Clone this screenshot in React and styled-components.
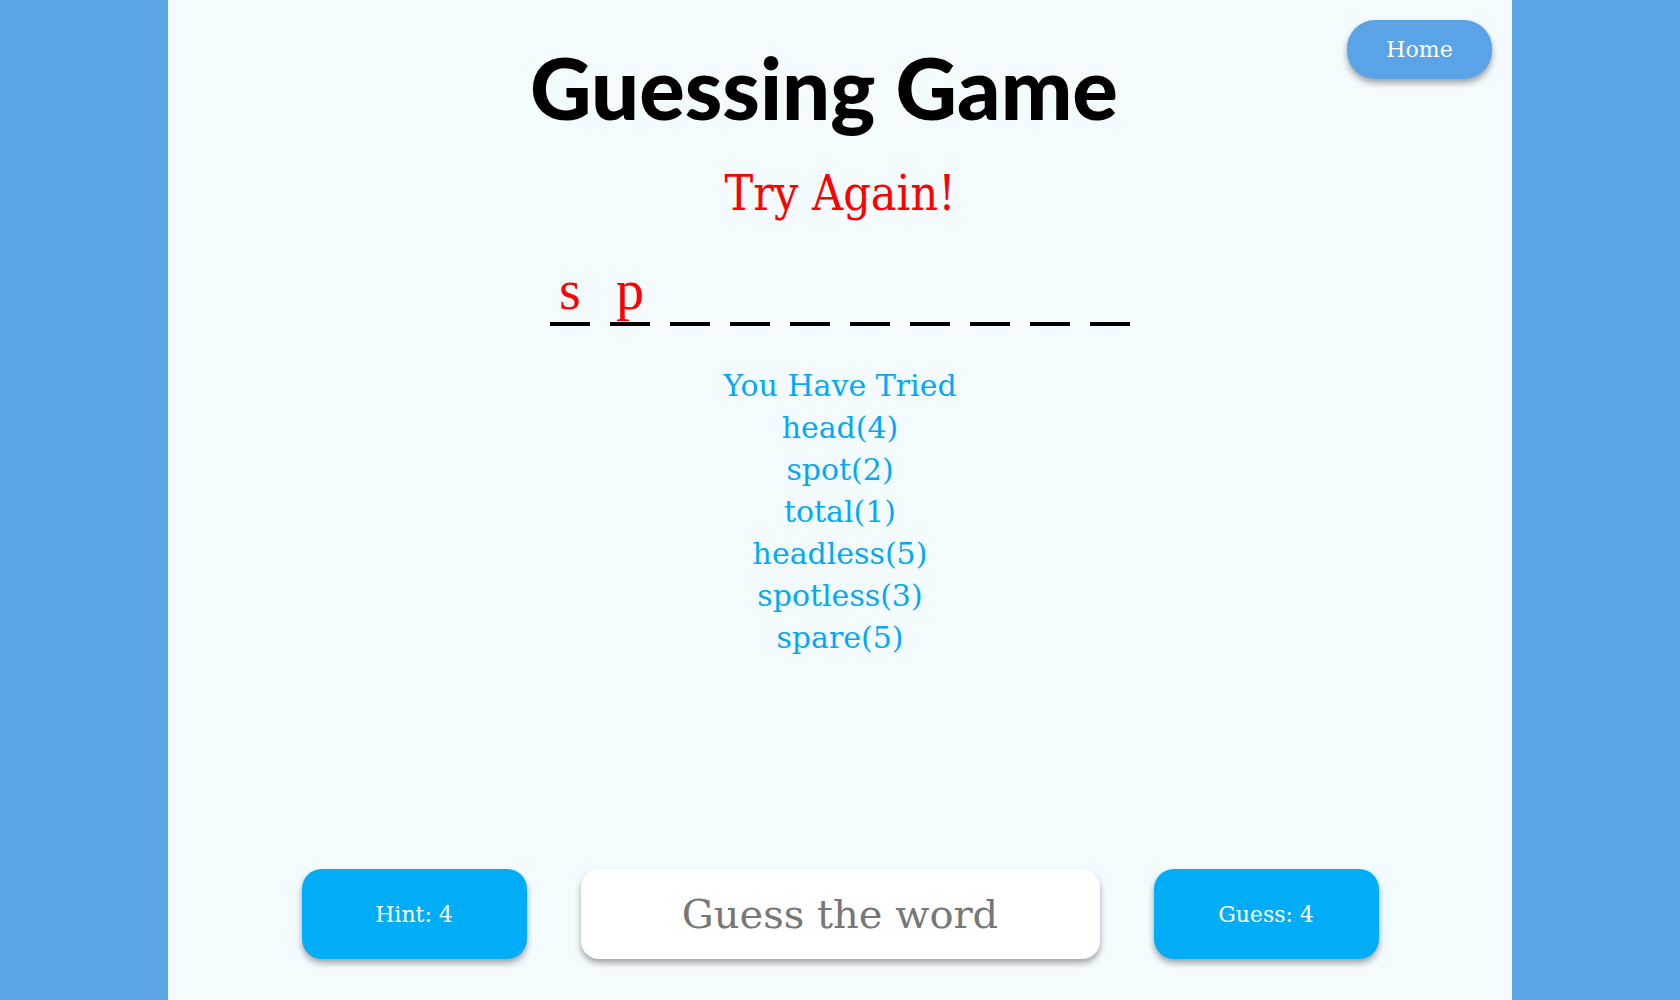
import React from "react";
import styled, { createGlobalStyle } from "styled-components";

const Global = createGlobalStyle`
  html, body { margin: 0; padding: 0; height: 100%; }
  body { background: #5aa5e6; font-family: "Liberation Serif", serif; }
  #root { height: 100%; }
`;

const Page = styled.div`
  width: 80%;
  height: 100vh;
  margin: 0 auto;
  background: #f3fbff;
  display: flex;
  flex-direction: column;
  align-items: center;
  box-sizing: border-box;
`;

const Header = styled.header`
  width: 100%;
  display: grid;
  grid-template-columns: 1fr auto 1fr;
  align-items: start;
  padding-top: 20px;
  box-sizing: border-box;
`;

const Title = styled.h1`
  grid-column: 2;
  margin: 21px 0 0;
  padding-right: 32px;
  font-family: "Lato", sans-serif;
  font-weight: 900;
  font-size: 85px;
  line-height: 1.1;
  color: #000;
`;

const HomeButton = styled.button`
  grid-column: 3;
  justify-self: end;
  margin-right: 20px;
  width: 145px;
  height: 59px;
  border: none;
  border-radius: 28px;
  background: #5aa3e6;
  color: #fff;
  font-family: "DejaVu Serif", serif;
  font-size: 22px;
  box-shadow: 0 4px 6px rgba(0, 0, 0, 0.35);
`;

const Status = styled.div`
  margin-top: 30px;
  color: #ff0000;
  font-family: "DejaVu Serif Condensed", "DejaVu Serif", serif;
  font-stretch: condensed;
  font-size: 48px;
  line-height: 1.2;
`;

const Slots = styled.div`
  display: flex;
  margin-top: 36px;
`;

const Slot = styled.span`
  width: 40px;
  height: 64px;
  margin: 0 10px;
  border-bottom: 4px solid #000;
  color: #ff0000;
  font-family: "Liberation Serif", serif;
  font-size: 56px;
  line-height: 64px;
  text-align: center;
`;

const Tried = styled.div`
  margin-top: 39px;
  display: flex;
  flex-direction: column;
  align-items: center;
  color: #03a9f4;
  font-family: "DejaVu Serif", serif;
  font-size: 30px;
  line-height: 42px;
`;

const Controls = styled.div`
  margin-top: auto;
  margin-bottom: 41px;
  display: flex;
  gap: 54px;
`;

const ActionButton = styled.button`
  width: 225px;
  height: 90px;
  border: none;
  border-radius: 20px;
  background: #02adf8;
  color: #fff;
  font-family: "DejaVu Serif", serif;
  font-size: 22px;
  box-shadow: 0 4px 6px rgba(0, 0, 0, 0.35);
`;

const GuessInput = styled.input`
  width: 519px;
  height: 90px;
  box-sizing: border-box;
  border: none;
  border-radius: 18px;
  background: #fff;
  text-align: center;
  font-family: "DejaVu Serif", serif;
  font-size: 40px;
  color: #333;
  box-shadow: 0 4px 6px rgba(0, 0, 0, 0.35);
  outline: none;
  &::placeholder { color: #777; }
`;

const letters = ["s", "p", "", "", "", "", "", "", "", ""];
const tried = ["head(4)", "spot(2)", "total(1)", "headless(5)", "spotless(3)", "spare(5)"];

export default function App() {
  return (
    <>
      <Global />
      <Page>
        <Header>
          <Title>Guessing Game</Title>
          <HomeButton>Home</HomeButton>
        </Header>
        <Status>Try Again!</Status>
        <Slots>
          {letters.map((l, i) => (
            <Slot key={i}>{l}</Slot>
          ))}
        </Slots>
        <Tried>
          <span>You Have Tried</span>
          {tried.map((t) => (
            <span key={t}>{t}</span>
          ))}
        </Tried>
        <Controls>
          <ActionButton>Hint: 4</ActionButton>
          <GuessInput placeholder="Guess the word" />
          <ActionButton>Guess: 4</ActionButton>
        </Controls>
      </Page>
    </>
  );
}
